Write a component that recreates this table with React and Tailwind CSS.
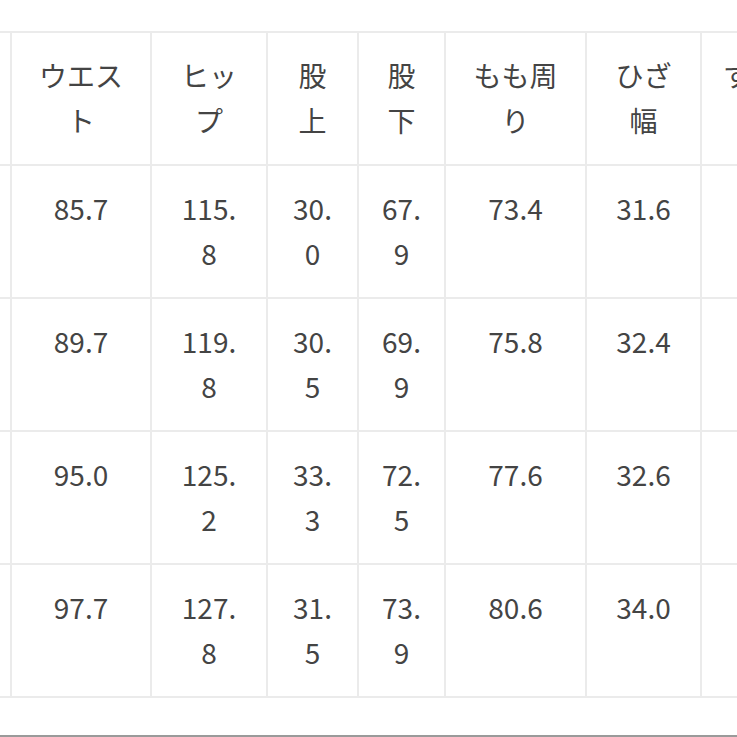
export default function App() {
  const headers = [
    [""],
    ["ウエス", "ト"],
    ["ヒッ", "プ"],
    ["股", "上"],
    ["股", "下"],
    ["もも周", "り"],
    ["ひざ", "幅"],
    ["すそ幅"],
  ];
  const rows = [
    [[""], ["85.7"], ["115.", "8"], ["30.", "0"], ["67.", "9"], ["73.4"], ["31.6"], [""]],
    [[""], ["89.7"], ["119.", "8"], ["30.", "5"], ["69.", "9"], ["75.8"], ["32.4"], [""]],
    [[""], ["95.0"], ["125.", "2"], ["33.", "3"], ["72.", "5"], ["77.6"], ["32.6"], [""]],
    [[""], ["97.7"], ["127.", "8"], ["31.", "5"], ["73.", "9"], ["80.6"], ["34.0"], [""]],
  ];
  const all = [headers, ...rows];
  return (
    <div
      className="w-[737px] h-[737px] overflow-hidden bg-white flex flex-col text-[#444444]"
      style={{ fontFamily: '"Noto Sans CJK JP", "Noto Sans", sans-serif' }}
    >
      <div className="h-[31px] shrink-0" />
      <div className="grid grid-cols-[10px_138px_114px_89px_85px_139px_113px_140px] auto-rows-[131px] gap-[2px] py-[2px] bg-[#ebebeb] w-[760px] shrink-0">
        {all.map((row, ri) =>
          row.map((cell, ci) => (
            <div
              key={ri + "-" + ci}
              className={
                "bg-white pt-[20px] text-[28px] leading-[45px] whitespace-nowrap " +
                (ci === 7 ? "pl-[21px] text-left" : "text-center")
              }
            >
              {cell.map((l, li) => (
                <div key={li}>{l}</div>
              ))}
            </div>
          ))
        )}
      </div>
      <div className="flex-1" />
      <div className="h-[2px] bg-[#9a9a9a] shrink-0" />
    </div>
  );
}
